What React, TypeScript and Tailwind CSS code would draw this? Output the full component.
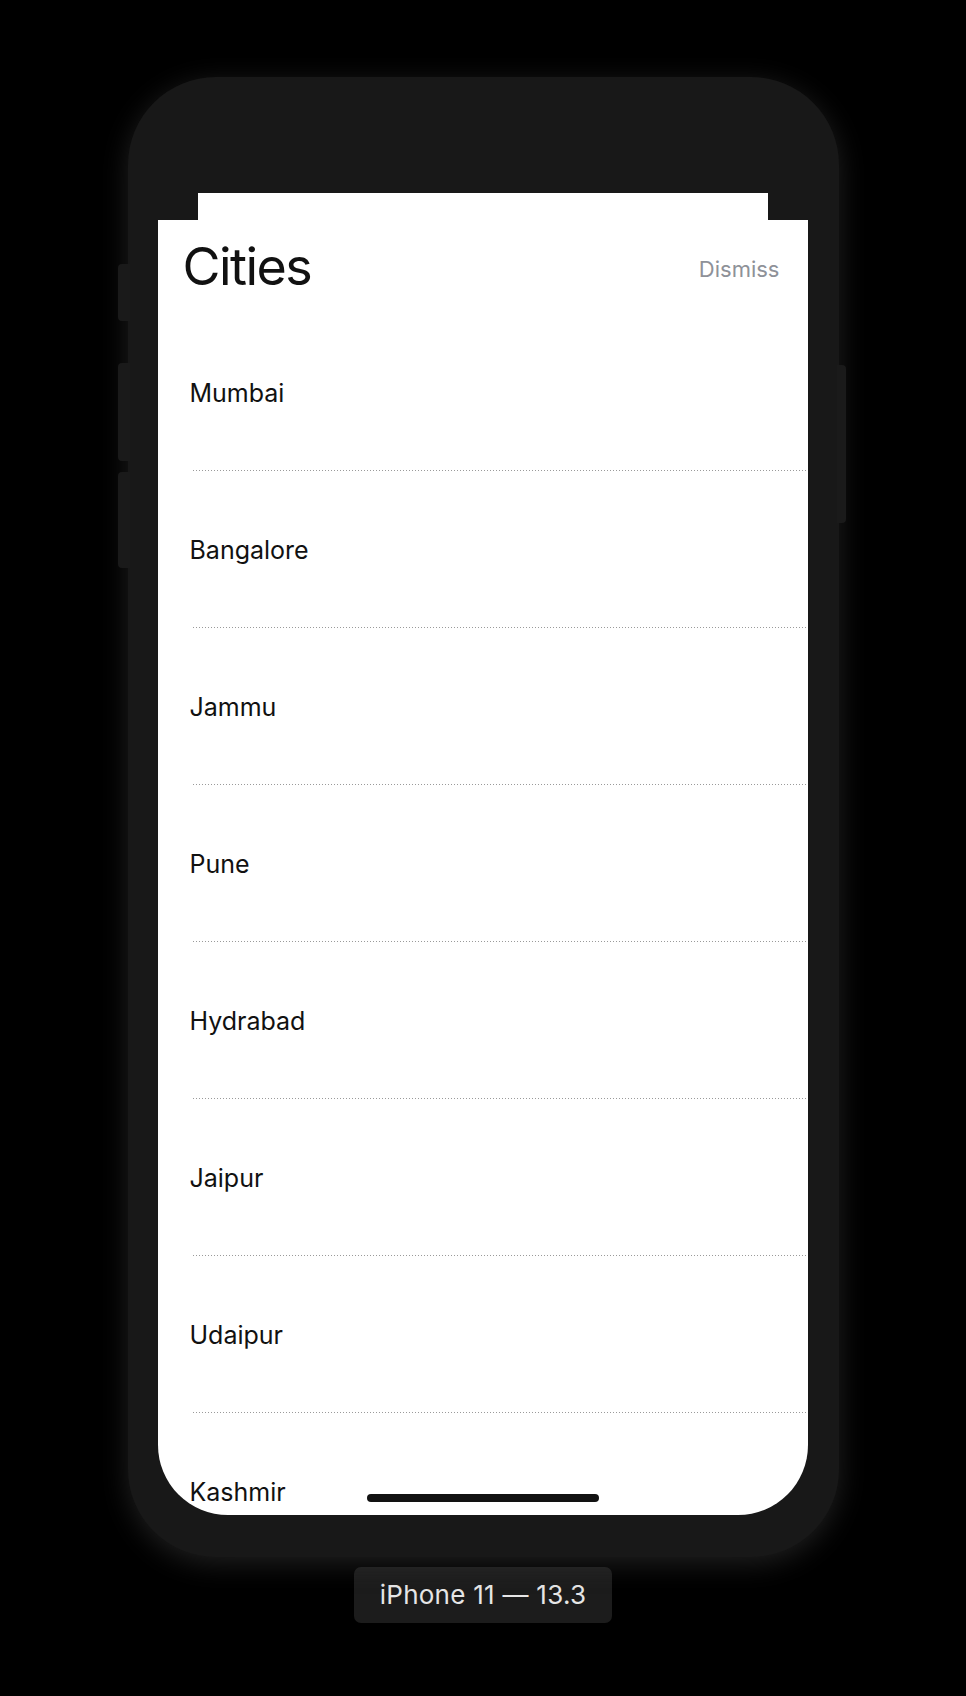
import React from "react";

const cities = ["Mumbai", "Bangalore", "Jammu", "Pune", "Hydrabad", "Jaipur", "Udaipur", "Kashmir"];

export default function App() {
  return (
    <div
      className="w-full h-[1696px] bg-black flex flex-col items-center overflow-hidden"
      style={{ fontFamily: "Inter, 'Liberation Sans', sans-serif" }}
    >
      <div className="relative mt-[77px] w-[711px] h-[1480px] rounded-[88px] bg-[#181818] shadow-[0_6px_28px_rgba(70,70,70,0.45)] flex flex-col pl-[30px] pt-[116px]">
        {/* side buttons */}
        <div className="absolute left-[-10px] top-[187px] w-[12px] h-[57px] rounded-l-[4px] bg-[#1a1a1a]" />
        <div className="absolute left-[-10px] top-[286px] w-[12px] h-[98px] rounded-l-[4px] bg-[#1a1a1a]" />
        <div className="absolute left-[-10px] top-[395px] w-[12px] h-[96px] rounded-l-[4px] bg-[#1a1a1a]" />
        <div className="absolute right-[-7px] top-[288px] w-[9px] h-[158px] rounded-r-[4px] bg-[#1a1a1a]" />

        {/* card behind the sheet */}
        <div className="ml-[40px] w-[570px] h-[27px] bg-white" />

        {/* screen / sheet */}
        <div className="relative w-[650px] h-[1295px] bg-white rounded-b-[70px] overflow-hidden flex flex-col">
          <div className="h-[94px] shrink-0 flex items-center justify-between pl-[25px] pr-[28px]">
            <span className="text-[52px] leading-none text-[#111] tracking-[-0.03em] font-normal">Cities</span>
            <span className="text-[22px] leading-none text-[#8e9198] mt-[4px]">Dismiss</span>
          </div>
          {cities.map((c) => (
            <div key={c} className="shrink-0 h-[157px] flex flex-col pl-[35px]">
              <div className="flex-1 flex items-center pt-[2px]">
                <span className="-ml-[3px] text-[25px] leading-none text-[#111]">{c}</span>
              </div>
              <div className="h-px w-full bg-[repeating-linear-gradient(90deg,#9a9a9a_0px,#9a9a9a_1px,transparent_1px,transparent_3px)]" />
            </div>
          ))}
          <div className="absolute left-[209px] bottom-[13px] w-[232px] h-[8px] rounded-full bg-[#121212]" />
        </div>
      </div>

      <div className="mt-[10px] w-[258px] h-[56px] rounded-[7px] bg-[#1c1c1c] flex items-center justify-center">
        <span className="text-[26px] leading-none text-[#e6e6e6] tracking-[0.01em]">iPhone 11 — 13.3</span>
      </div>
    </div>
  );
}
